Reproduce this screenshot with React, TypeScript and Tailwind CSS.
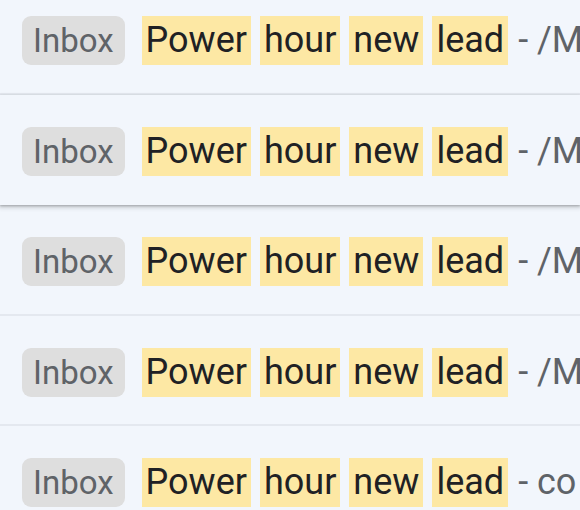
import React from 'react';

const ROWS = [
  { tail: '- /M', hovered: false },
  { tail: '- /M', hovered: true },
  { tail: '- /M', hovered: false },
  { tail: '- /M', hovered: false },
  { tail: '- co', hovered: false },
];

const WORDS = ['Power', 'hour', 'new', 'lead'];

const MailRow: React.FC<{ tail: string; hovered: boolean }> = ({ tail, hovered }) => (
  <div
    className={`relative flex h-[110.5px] items-start overflow-hidden whitespace-nowrap bg-[#f2f6fc] pl-[22px] pt-[32px] ${
      hovered
        ? 'z-10 shadow-[0_1px_2px_0_rgba(60,64,67,0.3),0_2px_4px_1px_rgba(60,64,67,0.2)]'
        : 'border-b-2 border-[#e4e8ef]'
    }`}
  >
    <span className="flex h-[49px] items-center rounded-[9px] bg-[#dedede] px-[11px] text-[33px] leading-none text-[#5f6368]">
      Inbox
    </span>
    <span className="ml-[17px] flex h-[49px] items-center text-[36px] leading-[49px] text-[#202124]">
      {WORDS.map((w, i) => (
        <React.Fragment key={w}>
          {i > 0 && <span className="w-[9px]" />}
          <span className="h-[49px] bg-[#fde8a4] px-1">{w}</span>
        </React.Fragment>
      ))}
      <span className="ml-[10px] text-[#5f6368]">{tail}</span>
    </span>
  </div>
);

export default function App() {
  return (
    <div
      className="h-[510px] w-[580px] overflow-hidden bg-[#f2f6fc]"
      style={{ fontFamily: 'Roboto, "Open Sans", sans-serif' }}
    >
      <div className="-mt-4 flex flex-col">
        {ROWS.map((r, i) => (
          <MailRow key={i} tail={r.tail} hovered={r.hovered} />
        ))}
      </div>
    </div>
  );
}
